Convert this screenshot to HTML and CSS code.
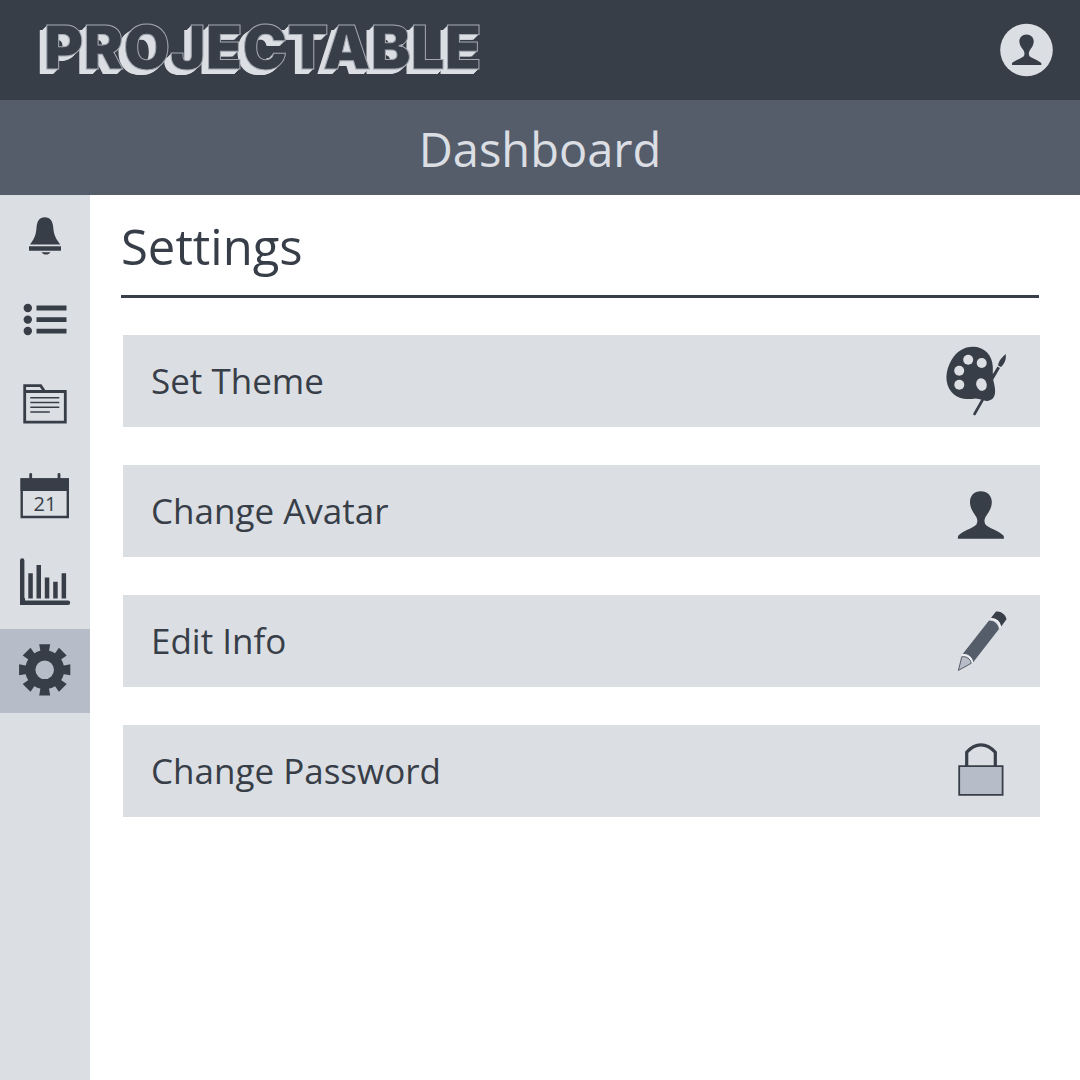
FILE: index.html
```html
<!DOCTYPE html>
<html lang="en">
<head>
<meta charset="utf-8">
<meta name="viewport" content="width=device-width, initial-scale=1">
<title>Projectable – Settings</title>
<link rel="stylesheet" href="styles.css">
</head>
<body>
<header class="topbar">
  <a class="logo" href="#">PROJECTABLE</a>
  <button class="profile" type="button" aria-label="Profile">
    <svg viewBox="1000 23 54 54" aria-hidden="true"><circle class="light" cx="1026.500" cy="50" r="26.300"/><path d="M1026.500 34.500c-4.500 0-7.500 3.500-7.100 7.500.3 4 2.500 5.700 4.200 8.500 1.100 2 1.300 4.500-.1 6-3 2.200-8.500 3.800-11.500 6.500V65h29.300v-2c-3-2.700-8.500-4.300-11.500-6.500-1.400-1.500-1.200-4-.1-6 1.700-2.800 3.700-4.500 4-8.500.4-4-2.700-7.500-7.200-7.500z"/></svg>
  </button>
</header>
<div class="titlebar">Dashboard</div>
<div class="layout">
  <nav class="sidebar" aria-label="Main">
    <a href="#" aria-label="Notifications"><svg viewBox="0 195 90 84"><path d="M30 244.500c3-4 6-8.500 6.500-16.500.4-7 3-10.800 8.300-10.800s8.200 3.800 8.500 10.800c.5 8 4 12.500 7 16.500zM29 246.200h32v4.600H29zM41.500 252.200h9c-2 3.200-7 3.200-9 0z"/></svg></a>
    <a href="#" aria-label="Tasks"><svg viewBox="0 279 90 84"><circle cx="27.800" cy="308" r="4.200"/><circle cx="27.800" cy="319.600" r="4.200"/><circle cx="27.800" cy="331" r="4.200"/><path d="M36.500 305.600h30v4.800h-30zM36.500 317.200h30v4.800h-30zM36.500 328.700h30v4.800h-30z"/></svg></a>
    <a href="#" aria-label="Files"><svg viewBox="0 363 90 84"><path class="line" stroke-width="2.800" d="M24.700 391.500h40.600v30.600H24.700zM24.700 392v-6.300h16l4 6"/><path class="line" stroke-width="1.600" d="M30.300 397.700h29M30.300 402.500h29M30.300 407.300h29M30.300 412h19.500"/></svg></a>
    <a class="tall" href="#" aria-label="Calendar"><svg viewBox="0 447 90 91"><path d="M20.500 478.300H69V491H20.500z"/><path class="line" stroke-width="2.400" d="M21.700 479.500h46.100V517H21.700z"/><path class="line" stroke-width="2.800" stroke-linecap="round" d="M30.700 474.300v5M59 474.300v5"/><text x="45" y="511" text-anchor="middle">21</text></svg></a>
    <a class="tall" href="#" aria-label="Reports"><svg viewBox="0 538 90 91"><path class="line" stroke-width="4.400" stroke-linecap="round" d="M22.200 560.500v42M24 602.700h44"/><path d="M20 598h5v7h-5zM28.300 573.300h4.500v25.200h-4.500zM36.500 565h4.500v33.500h-4.500zM44.800 577.500h4.500v21h-4.500zM53.200 581.700h4.500v16.800h-4.500zM61.600 573.300h4.500v25.200h-4.500z"/></svg></a>
    <a class="active" href="#" aria-label="Settings" aria-current="page"><svg viewBox="0 629 90 84"><circle class="line" cx="44.700" cy="669.800" r="14.400" stroke-width="10.200"/><g><path id="cog" d="M39.200 644.200h11l-1.600 9h-7.800zM39.200 695.400h11l-1.600-9h-7.800z"/><use href="#cog" transform="rotate(45 44.700 669.800)"/><use href="#cog" transform="rotate(90 44.700 669.800)"/><use href="#cog" transform="rotate(135 44.700 669.800)"/></g></svg></a>
  </nav>
  <main class="content">
    <h1>Settings</h1>
    <div class="options">
      <button type="button"><span>Set Theme</span><svg viewBox="942 335 68 92" aria-hidden="true"><path class="line" stroke-width="2.600" stroke-linecap="round" d="M974.500 414l8-14"/><path d="M991.500 384l-1-6 7-11.500 2.500 1.500-7 12zM998 365.500c1-5 3-7 7.700-11.500.8 5.500-1 9.500-4.700 13zM973 346.800c11 0 19.500 8 19.800 20.200.1 6-.3 11 1 15.500 2.300 9 2.300 16.500-5.300 18.300-4.500 1-7.500-2.300-13-2.300-9 1.500-18.500.3-24-6.500-7-8.500-6.500-21 0-32 5-8.500 12.500-13.200 21.500-13.200z"/><g class="light"><circle cx="968.200" cy="359.700" r="5"/><circle cx="981.700" cy="363" r="5"/><circle cx="959.200" cy="370.700" r="5"/><circle cx="959.300" cy="384.700" r="5"/><ellipse cx="981.500" cy="384.500" rx="5.200" ry="6.400" transform="rotate(-18 981.500 384.500)"/></g></svg></button>
      <button type="button"><span>Change Avatar</span><svg viewBox="942 465 68 92" aria-hidden="true"><path d="M980.700 491.200c-7 0-11 5-10.700 11.300.3 6.500 3.500 10 6 14 2 3.500 1.500 6.300.2 8.300-4.700 4-13 6-17.500 10.500-1 1-.8 2.300-.8 3.500h46c0-1.200.2-2.500-.8-3.500-4.500-4.500-12.800-6.500-17.500-10.500-1.300-2-1.800-4.800.2-8.300 2.500-4 5.800-7.500 6-14 .3-6.300-4-11.300-11.100-11.300z"/></svg></button>
      <button type="button"><span>Edit Info</span><svg viewBox="942 595 68 92" aria-hidden="true"><path d="M996 611.600c4-1 9.500 2.300 10.500 7.600l-5.500 7.500c-1.500-5-5-7.700-10.500-8.200z"/><path class="slate" d="M989 620.500c5.500 0 9 3 10 8.500l-26 33.500c-1-5.500-4.500-8.500-10.300-8.500z"/><path class="edge" d="M990.500 618.800c5.500.2 9 3 10 8.700M962 655c5.500-.3 9.500 2.700 10.500 8"/><path class="grey" stroke-width=".8" d="M961.800 656.800c4.500-.8 8.700 2 9.400 6.500l-12.800 7.100z"/></svg></button>
      <button type="button"><span>Change Password</span><svg viewBox="942 724 68 92" aria-hidden="true"><path class="line" stroke-width="3.200" d="M966.700 766v-14.700c8.500-10 20-10 28.600 0V766"/><path class="grey" stroke-width="1.800" d="M959.200 765.200h43.400v28.600H959.200z"/></svg></button>
    </div>
  </main>
</div>
</body>
</html>
```
FILE: styles.css
```css
:root {
  --dark: #383e48;
  --slate: #555d6b;
  --light: #dbdee3;
  --grey: #b6bdc8;
}

* { box-sizing: border-box; }

body {
  margin: 0;
  min-height: 100vh;
  display: flex;
  flex-direction: column;
  background: #fff;
  color: var(--dark);
  font-family: "Open Sans", sans-serif;
}

svg { display: block; fill: var(--dark); }
.line { fill: none; stroke: var(--dark); }
.light { fill: var(--light); }
.slate { fill: var(--slate); }
.grey { fill: var(--grey); stroke: var(--dark); }
.edge { fill: none; stroke: #eceef1; stroke-width: 2; }

.topbar {
  height: 100px;
  padding: 0 26px 6px 44px;
  display: flex;
  align-items: center;
  justify-content: space-between;
  background: var(--dark);
}

.logo {
  color: var(--dark);
  font: 900 60px/80px Inter, sans-serif;
  text-decoration: none;
  -webkit-text-stroke: 1px #a2a7b0;
  text-shadow: -1px 1px var(--light), -2px 2px var(--light), -3px 3px var(--light),
    -4px 4px var(--light), -5px 5px var(--light), -6px 5px var(--light), -7px 5px var(--light);
}

.profile {
  width: 54px;
  height: 54px;
  margin-top: 6px;
  padding: 0;
  border: 0;
  border-radius: 50%;
  background: none;
}

.titlebar {
  height: 95px;
  background: var(--slate);
  color: var(--light);
  font-size: 47px;
  line-height: 98px;
  text-align: center;
}

.layout { flex: 1; display: flex; }

.sidebar {
  width: 90px;
  flex: none;
  display: flex;
  flex-direction: column;
  background: var(--light);
}

.sidebar a { height: 84px; }
.sidebar .tall { height: 91px; }
.sidebar .active { background: var(--grey); }
.sidebar svg { width: 100%; height: 100%; }
.sidebar text { font-size: 20px; }

.content { flex: 1; padding: 0 40px 40px 31px; }

h1 {
  margin: 0 1px 37px 0;
  height: 103px;
  border-bottom: 3px solid var(--dark);
  font-size: 49px;
  font-weight: 400;
  line-height: 102px;
}

.options { display: grid; gap: 38px; padding-left: 2px; }

.options button {
  height: 92px;
  padding: 0 30px 0 28px;
  display: flex;
  align-items: center;
  justify-content: space-between;
  border: 0;
  background: var(--light);
  color: inherit;
  font: 400 35px/52px "Open Sans", sans-serif;
  text-align: left;
}

.options svg { width: 68px; height: 92px; }
```
